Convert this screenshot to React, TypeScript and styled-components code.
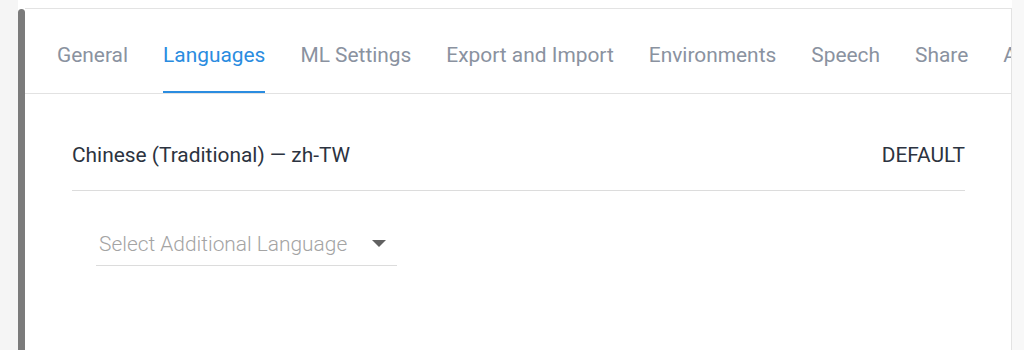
import React from "react";
import styled, { createGlobalStyle } from "styled-components";

const GlobalStyle = createGlobalStyle`
	html, body {
		margin: 0;
		padding: 0;
		background: #ffffff;
		font-family: Roboto, "Liberation Sans", Arial, sans-serif;
	}
`;

const tabs = [
	"General",
	"Languages",
	"ML Settings",
	"Export and Import",
	"Environments",
	"Speech",
	"Share",
	"Advanced",
];

const App: React.FC = () => {
	return (
		<Page>
			<GlobalStyle />
			<Gutter>
				<ScrollThumb />
			</Gutter>
			<Panel>
				<TabBar>
					{tabs.map((t) => (
						<Tab key={t} active={t === "Languages"}>
							{t}
						</Tab>
					))}
				</TabBar>
				<Content>
					<LangRow>
						<LangName>Chinese (Traditional) — zh-TW</LangName>
						<LangTag>DEFAULT</LangTag>
					</LangRow>
					<Select>
						<Placeholder>Select Additional Language</Placeholder>
						<Caret />
					</Select>
				</Content>
			</Panel>
			<RightEdge />
		</Page>
	);
};

export default App;

const Page = styled.div`
	display: flex;
	width: 1024px;
	height: 350px;
	overflow: hidden;
	background: #ffffff;
`;
const Gutter = styled.div`
	display: flex;
	width: 25px;
	flex-shrink: 0;
	background: linear-gradient(to right, #f5f5f5 0 18px, transparent 18px);
	justify-content: flex-end;
	padding-top: 9px;
	box-sizing: border-box;
`;
const ScrollThumb = styled.div`
	width: 7px;
	height: 100%;
	background: #7b7b7b;
	border-radius: 4px 4px 0 0;
`;
const Panel = styled.div`
	display: flex;
	flex-direction: column;
	width: 986px;
	flex-shrink: 0;
	margin-top: 8px;
	border-top: 1px solid #e3e3e3;
	border-right: 1px solid #e3e3e3;
	background: #ffffff;
	overflow: hidden;
`;
const TabBar = styled.nav`
	display: flex;
	gap: 35px;
	padding: 0 32px;
	height: 84px;
	border-bottom: 1px solid #e2e2e2;
	white-space: nowrap;
	overflow: hidden;
`;
const Tab = styled.div<{ active?: boolean }>`
	display: flex;
	align-items: center;
	flex-shrink: 0;
	font-size: 20.9px;
	color: ${(p) => (p.active ? "#2a8ce0" : "#8a92a0")};
	border-bottom: 2px solid ${(p) => (p.active ? "#2a8ce0" : "transparent")};
	padding-top: 10px;
	box-sizing: border-box;
`;
const Content = styled.div`
	display: flex;
	flex-direction: column;
	padding: 0 46px 0 47px;
`;
const LangRow = styled.div`
	display: flex;
	justify-content: space-between;
	align-items: center;
	padding: 50px 0 24px;
	line-height: 22px;
	font-size: 20.9px;
	color: #2c3340;
	border-bottom: 1px solid #dcdcdc;
`;
const LangName = styled.span``;
const LangTag = styled.span``;
const Select = styled.div`
	display: flex;
	align-items: center;
	justify-content: space-between;
	width: 301px;
	margin: 41px 0 0 24px;
	padding: 0 11px 9px 3px;
	box-sizing: border-box;
	line-height: 24px;
	border-bottom: 1px solid #dcdcdc;
`;
const Placeholder = styled.span`
	font-size: 20.9px;
	font-weight: 300;
	color: #a4a4a4;
	white-space: nowrap;
`;
const Caret = styled.span`
	width: 0;
	height: 0;
	margin-top: -2px;
	border-left: 7px solid transparent;
	border-right: 7px solid transparent;
	border-top: 7px solid #616161;
`;
const RightEdge = styled.div`
	flex: 1;
	background: #f8f8f8;
`;
